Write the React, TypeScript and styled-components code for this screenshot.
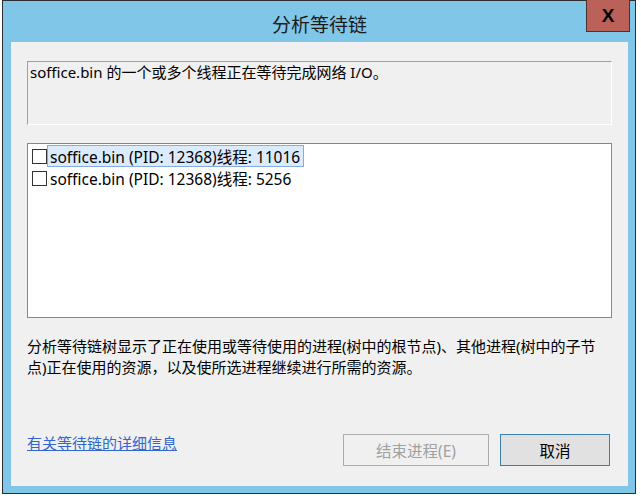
import React from "react";
import styled, { createGlobalStyle } from "styled-components";

const GlobalStyle = createGlobalStyle`
  html, body {
    margin: 0;
    padding: 0;
    background: #ececec;
  }
  body {
    font-family: "Noto Sans", "Noto Sans CJK SC", sans-serif;
    color: #000;
  }
`;

const Page = styled.div`
  width: 641px;
  height: 500px;
  padding-left: 2px;
  box-sizing: border-box;
  background: #ffffff;
`;

const Window = styled.div`
  position: relative;
  width: 634px;
  height: 494px;
  box-sizing: border-box;
  border: 1px solid #2e2e2e;
  background: #80c6e8;
  display: flex;
  flex-direction: column;
  padding: 0 7px 7px 8px;
`;

const TitleBar = styled.div`
  height: 41px;
  display: flex;
  align-items: center;
  justify-content: center;
  padding-top: 3px;
  box-sizing: border-box;
  font-family: "Noto Sans CJK SC", sans-serif;
  font-size: 19px;
  color: #1a1a1a;
`;

const CloseButton = styled.div`
  position: absolute;
  top: -1px;
  right: 5px;
  width: 44px;
  height: 32px;
  box-sizing: border-box;
  border: 1px solid #4a3230;
  border-top: none;
  background: #ba6159;
  display: flex;
  align-items: center;
  justify-content: center;
  font-family: "Liberation Sans", sans-serif;
  font-weight: bold;
  font-size: 19px;
  color: #000;
`;

const Client = styled.div`
  flex: 1;
  background: #f0f0f0;
  display: flex;
  flex-direction: column;
  padding: 19px 16px 20px 16px;
  box-sizing: border-box;
  font-size: 15px;
`;

const InfoBox = styled.div`
  height: 64px;
  box-sizing: border-box;
  border-top: 1px solid #a0a0a0;
  border-left: 1px solid #a0a0a0;
  border-bottom: 1px solid #ffffff;
  border-right: 1px solid #ffffff;
  padding: 0 2px;
  line-height: 21px;
`;

const ListBox = styled.div`
  margin-top: 18px;
  height: 175px;
  box-sizing: border-box;
  border: 1px solid #828790;
  background: #ffffff;
  padding: 1px 0 0 4px;
  font-size: 15.5px;
`;

const Row = styled.div`
  display: flex;
  align-items: center;
  height: 22px;
`;

const Check = styled.span`
  width: 15px;
  height: 15px;
  box-sizing: border-box;
  border: 1px solid #333333;
  background: #ffffff;
  flex: none;
`;

const ItemLabel = styled.span<{ $selected?: boolean }>`
  height: 22px;
  box-sizing: border-box;
  display: flex;
  align-items: center;
  padding: 0 3px 0 2px;
  border: 1px solid ${(p) => (p.$selected ? "#84acdd" : "transparent")};
  background: ${(p) => (p.$selected ? "#dcebfc" : "transparent")};
  white-space: nowrap;
`;

const Description = styled.p`
  margin: 18px 0 0 0;
  line-height: 21px;
`;

const Footer = styled.div`
  margin-top: auto;
  display: flex;
  align-items: flex-start;
`;

const Link = styled.a`
  color: #3366cc;
  text-decoration: underline;
  line-height: 18px;
  cursor: pointer;
`;

const Buttons = styled.div`
  margin-left: auto;
  margin-right: 2px;
  display: flex;
  gap: 11px;
`;

const Button = styled.button<{ $primary?: boolean; $width: number }>`
  width: ${(p) => p.$width}px;
  height: 32px;
  box-sizing: border-box;
  font-family: "Noto Sans", "Noto Sans CJK SC", sans-serif;
  font-size: 15.5px;
  border: 1px solid ${(p) => (p.$primary ? "#3c7fb1" : "#adadad")};
  background: ${(p) => (p.$primary ? "#e1e1e1" : "#f0f0f0")};
  color: ${(p) => (p.$primary ? "#000000" : "#a0a0a0")};
  padding: 0;
`;

const items = [
  { label: "soffice.bin (PID: 12368)线程: 11016", selected: true },
  { label: "soffice.bin (PID: 12368)线程: 5256", selected: false },
];

export default function App() {
  return (
    <>
      <GlobalStyle />
      <Page>
        <Window>
          <TitleBar>分析等待链</TitleBar>
          <CloseButton>X</CloseButton>
          <Client>
            <InfoBox>soffice.bin 的一个或多个线程正在等待完成网络 I/O。</InfoBox>
            <ListBox>
              {items.map((it) => (
                <Row key={it.label}>
                  <Check />
                  <ItemLabel $selected={it.selected}>{it.label}</ItemLabel>
                </Row>
              ))}
            </ListBox>
            <Description>
              分析等待链树显示了正在使用或等待使用的进程(树中的根节点)、其他进程(树中的子节点)正在使用的资源，以及使所选进程继续进行所需的资源。
            </Description>
            <Footer>
              <Link>有关等待链的详细信息</Link>
              <Buttons>
                <Button $width={146} disabled>
                  结束进程(E)
                </Button>
                <Button $width={110} $primary>
                  取消
                </Button>
              </Buttons>
            </Footer>
          </Client>
        </Window>
      </Page>
    </>
  );
}
